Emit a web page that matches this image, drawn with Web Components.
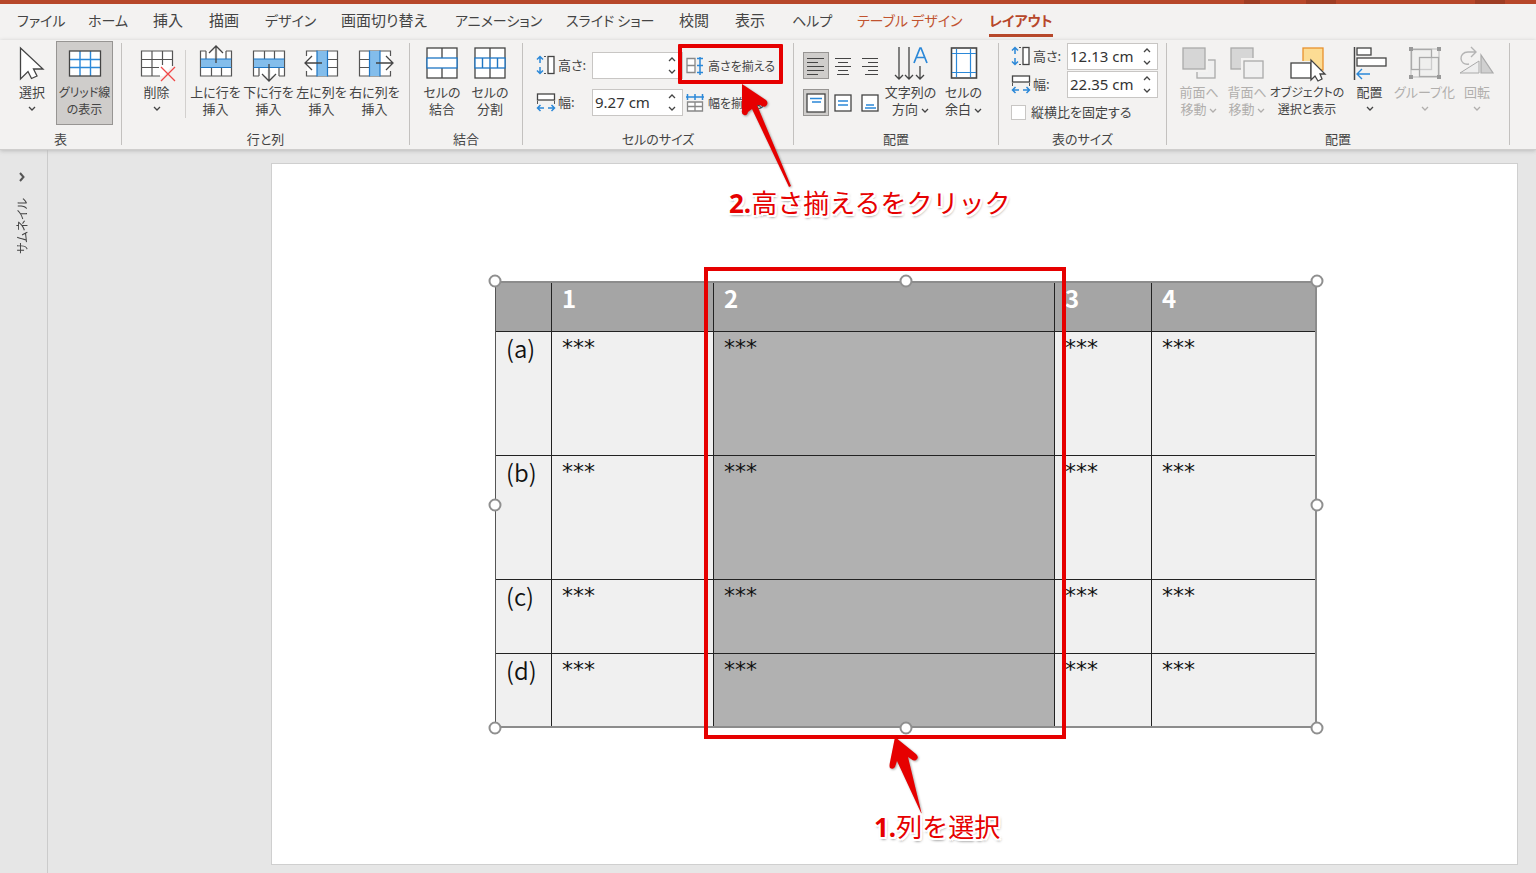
<!DOCTYPE html>
<html lang="ja">
<head>
<meta charset="utf-8">
<title>レイアウト</title>
<style>
html,body{margin:0;height:100%}
body{font-family:"Noto Sans CJK JP","Noto Sans",sans-serif;font-feature-settings:"palt";color:#444;background:#e6e6e6}
</style>
</head>
<body>
<ppt-window></ppt-window>
<script>
const K = '#444', B = '#2b88d8', F = '#83bdeb';
const chevron = 'M1 1l3 3 3-3';
const heightIcon = `<g fill="none" stroke="${B}" stroke-width="1.5"><path d="M4 2v6M1 4.5L4 1.5l3 3M4 12v6M1 15.5l3 3 3-3"/></g><path d="M8 1.5h3M8 18.500h3" stroke="#555" stroke-dasharray="2 1"/><rect x="12" y="1.500" width="6" height="17" fill="#fff" stroke="${K}" stroke-width="1.300"/>`;
const widthIcon = `<rect x="1.500" y="2" width="17" height="6" fill="#fff" stroke="${K}" stroke-width="1.300"/><path d="M1.500 9v3M18.500 9v3" stroke="#555"/><g fill="none" stroke="${B}" stroke-width="1.500"><path d="M2 16h6M4.500 13l-3 3 3 3M12 16h6M15.500 13l3 3-3 3"/></g>`;
const ICONS = {
  cursor:[34,34,`<path d="M5.500 2V33L13 25.500L16.500 32.500L22 30L18.500 23H28Z" fill="#fff" stroke="${K}" stroke-width="1.300"/>`],
  grid:[34,34,`<rect x="1.500" y="5" width="31" height="25" fill="#fff"/><path d="M12 5v25M22.500 5v25M2 13.500h30M2 21.500h30" stroke="${B}" stroke-width="1.400"/><rect x="1.500" y="5" width="31" height="25" fill="none" stroke="${K}" stroke-width="1.300"/>`],
  del:[34,34,`<path d="M1.500 5h31v14l-9 11h-22z" fill="#fff"/><path d="M20 30H1.500V5h31v15M12 5v25M22.500 5v14M2 13.500h30M2 21.500h17" fill="none" stroke="#555" stroke-width="1.200"/><path d="M21 21l14 14M35 21L21 35" stroke="#f04848" stroke-width="1.300"/>`],
  up:[34,34,`<rect x="1.500" y="5" width="31" height="25" fill="#fff"/><path d="M7 5H1.500v25h31V5H27M7 5v8M27 5v8M12.500 22v8M22.500 22v8" fill="none" stroke="#555" stroke-width="1.200"/><rect x="2" y="13" width="30" height="8.500" fill="${F}"/><path d="M1.500 13h31M1.500 21.500h31" stroke="#1e76c4" stroke-width="1.200"/><path d="M17 12V1" stroke="#f3f2f1" stroke-width="4"/><path d="M17 17V0M10 7l7-7 7 7" fill="none" stroke="${K}" stroke-width="1.300"/>`],
  down:[34,36,`<rect x="1.500" y="5" width="31" height="25" fill="#fff"/><path d="M7 30H1.500V5h31v25H27M12.500 5v8M22.500 5v8M7 22v8M27 22v8" fill="none" stroke="#555" stroke-width="1.200"/><rect x="2" y="13" width="30" height="8.500" fill="${F}"/><path d="M1.500 13h31M1.500 21.500h31" stroke="#1e76c4" stroke-width="1.200"/><path d="M17 24v11" stroke="#f3f2f1" stroke-width="4"/><path d="M17 18v17M10 28l7 7 7-7" fill="none" stroke="${K}" stroke-width="1.300"/>`],
  left:[34,34,`<rect x="2" y="5" width="30" height="25" fill="#fff"/><path d="M1.500 10V5h31v25h-31v-5M22 13.500h10M22 21.500h10" fill="none" stroke="#555" stroke-width="1.200"/><rect x="12" y="5" width="10" height="25" fill="${F}"/><path d="M12 4.500v26M22.500 4.500v26" stroke="#1e76c4" stroke-width="1.200"/><path d="M17 17H0M7 10l-7 7 7 7" fill="none" stroke="${K}" stroke-width="1.300"/>`],
  right:[34,34,`<rect x="2" y="5" width="30" height="25" fill="#fff"/><path d="M32.500 10V5h-31v25h31v-5M12 13.500H2M12 21.500H2" fill="none" stroke="#555" stroke-width="1.200"/><rect x="12" y="5" width="10" height="25" fill="${F}"/><path d="M11.500 4.500v26M22 4.500v26" stroke="#1e76c4" stroke-width="1.200"/><path d="M18 17h16M28 10l7 7-7 7" fill="none" stroke="${K}" stroke-width="1.300"/>`],
  merge:[34,34,`<rect x="2" y="2" width="30" height="30" fill="#fff" stroke="${K}" stroke-width="1.300"/><path d="M17 2v10M17 22v10" stroke="${K}" stroke-width="1.300"/><rect x="2" y="12" width="30" height="10" fill="#fff" stroke="#1e76c4" stroke-width="1.300"/>`],
  split:[34,34,`<rect x="2" y="2" width="30" height="30" fill="#fff" stroke="${K}" stroke-width="1.300"/><path d="M17 2v10M17 22v10" stroke="${K}" stroke-width="1.300"/><rect x="2" y="12" width="30" height="10" fill="#fff" stroke="#1e76c4" stroke-width="1.300"/><path d="M9.500 12v10M17 12v10M24.500 12v10" stroke="#1e76c4" stroke-width="1.400"/>`],
  textdir:[34,34,`<g fill="none" stroke="${K}" stroke-width="1.300"><path d="M5 1v32M1 29l4 4 4-4M15 1v32M11 29l4 4 4-4M26 20v13M22 29l4 4 4-4"/></g><path d="M20 17l6-15h1l6 15M22 11.500h9" fill="none" stroke="${B}" stroke-width="1.700"/>`],
  margins:[34,34,`<rect x="4.500" y="2" width="25" height="30" fill="#fff" stroke="${K}" stroke-width="1.600"/><path d="M9.500 3v28M23.500 3v28M5 7.500h24M5 26.500h24" stroke="${B}" stroke-width="1.200"/>`],
  front:[34,34,`<rect x="15" y="14" width="18" height="18" fill="#f0f0f0" stroke="#aaa" stroke-width="1.300"/><rect x="0" y="0" width="26" height="26" fill="#f3f2f1"/><rect x="1" y="2" width="22" height="21" fill="#d6d6d6" stroke="#aaa" stroke-width="1.300"/>`],
  back:[34,34,`<rect x="1" y="2" width="22" height="21" fill="#d6d6d6" stroke="#aaa" stroke-width="1.300"/><rect x="11" y="12" width="23" height="22" fill="#f3f2f1"/><rect x="14" y="15" width="19" height="17" fill="#f0f0f0" stroke="#aaa" stroke-width="1.300"/>`],
  select:[34,34,`<rect x="13" y="2" width="20" height="22" fill="#fcdc94" stroke="#e8912d" stroke-width="1.300"/><path d="M0 15h22v18H0z" fill="#f3f2f1"/><rect x="1" y="17" width="20" height="15" fill="#fff" stroke="${K}" stroke-width="1.300"/><path d="M21 14v20l4-4 3 5 4-2-2-5h5z" fill="#fff" stroke="${K}" stroke-width="1.300"/>`],
  align:[34,34,`<path d="M1.500 1v33" stroke="${K}" stroke-width="1.500"/><rect x="4" y="2" width="14" height="7" fill="#fff" stroke="${K}" stroke-width="1.300"/><rect x="4" y="12" width="29" height="8" fill="#fff" stroke="${K}" stroke-width="1.300"/><path d="M17 28H4M9 23l-5 5 5 5" fill="none" stroke="${B}" stroke-width="1.400"/>`],
  group:[34,34,`<rect x="3" y="3" width="28" height="28" fill="none" stroke="#bbb"/><g fill="#eee" fill-opacity=".500" stroke="#aaa" stroke-width="1.300"><rect x="3.500" y="3.500" width="20" height="20"/><rect x="11.500" y="11.500" width="19" height="19"/></g><path d="M1 1h4v4H1zM29 1h4v4h-4zM1 29h4v4H1zM29 29h4v4h-4z" fill="#999"/>`],
  rotate:[36,34,`<path d="M10 18C0 20-1 6 9 6h8M12 1l5 5-5 5" fill="none" stroke="#b4b4b4" stroke-width="1.400"/><path d="M1 27l19-12v12z" fill="#eee" stroke="#aaa"/><path d="M22 27V9l12 18z" fill="#d0d0d0" stroke="#aaa" stroke-width="1.200"/>`],
  height:[20,20,heightIcon], width:[20,20,widthIcon],
  rows:[18,18,`<path d="M1 1.500h8v14H1zM1 8.500h8" fill="#fff" stroke="#888" stroke-width="1.300"/><path d="M11 1.500h6M11 8.500h6M11 15.500h6M14 0v18" fill="none" stroke="${B}" stroke-width="1.500"/>`],
  cols:[18,18,`<path d="M1.500 8h15v9h-15zM9 8v9M1.500 12.500h15" fill="#fff" stroke="#888" stroke-width="1.300"/><path d="M0 3h18M1.500 0v6M9 0v6M16.500 0v6" fill="none" stroke="${B}" stroke-width="1.500"/>`],
  hl:[18,18,`<path d="M0 1.500h17M0 5.500h11M0 9.500h17M0 13.500h17M0 17.500h11" stroke="${K}" stroke-width="1.200"/>`],
  hc:[18,18,`<path d="M1 1.500h16M4 5.500h10M1 9.500h16M4 13.500h10M3 17.500h12" stroke="${K}" stroke-width="1.200"/>`],
  hr:[18,18,`<path d="M1 1.500h16M7 5.500h10M1 9.500h16M7 13.500h10M4 17.500h13" stroke="${K}" stroke-width="1.200"/>`],
  vt:[18,18,`<rect x="0" y="0" width="18" height="18" fill="#fff" stroke="${K}" stroke-width="1.300"/><path d="M3 4.500h12M5 8h9" stroke="${B}" stroke-width="1.300"/>`],
  vm:[18,18,`<rect x="1" y="1" width="16" height="16" fill="#fff" stroke="${K}" stroke-width="1.300"/><path d="M4 7h10M4 11h10" stroke="${B}" stroke-width="1.300"/>`],
  vb:[18,18,`<rect x="1" y="1" width="16" height="16" fill="#fff" stroke="${K}" stroke-width="1.300"/><path d="M5 11h8M4 14h11" stroke="${B}" stroke-width="1.300"/>`],
  chev:[8,5,`<path d="${chevron}" fill="none" stroke="currentColor" stroke-width="1.300"/>`],
  chevup:[8,5,`<path d="M1 4l3-3 3 3" fill="none" stroke="#444" stroke-width="1.300"/>`],
  chevright:[6,10,`<path d="M1 1l3.500 4L1 9" fill="none" stroke="#555" stroke-width="2"/>`]
};
const define = (name, html, setup) => customElements.define(name, class extends HTMLElement {
  constructor(){
    super();
    const t = document.createElement('template');
    t.innerHTML = html;
    this.attachShadow({mode:'open'}).append(t.content.cloneNode(true));
  }
  connectedCallback(){ if (setup) setup(this, this.shadowRoot); }
});

define('rb-icon', `<style>:host{display:inline-flex;flex:none;vertical-align:middle}svg{display:block;overflow:visible}</style><svg aria-hidden="true"></svg>`, (el, root) => {
  const [w,h,body] = ICONS[el.getAttribute('name')];
  const s = root.querySelector('svg');
  s.setAttribute('width', w); s.setAttribute('height', h); s.setAttribute('viewBox', `0 0 ${w} ${h}`);
  s.innerHTML = body;
});

define('rb-tab', `<style>
:host{display:block;white-space:nowrap}
a{display:inline-block;color:inherit;text-decoration:none;font-size:var(--tab-size,14px);line-height:24px;padding-bottom:2px;border-bottom:3px solid transparent}
:host([wide]){--tab-size:15px}
:host([context]){color:#c1532f}
:host([current]) a{font-weight:700;border-color:#b7472a;color:#b7472a}
</style><a href="#"><slot></slot></a>`);

define('rb-tabs', `<style>
:host{display:block;height:36px;background:#f3f2f1}
nav{display:grid;grid-template-columns:71px 65px 56px 56px 76px 114px 111px 113px 56px 57px 65px 132px auto;padding:3px 0 0 17px}
</style><nav>
<rb-tab>ファイル</rb-tab><rb-tab>ホーム</rb-tab><rb-tab wide>挿入</rb-tab><rb-tab wide>描画</rb-tab><rb-tab>デザイン</rb-tab><rb-tab wide>画面切り替え</rb-tab><rb-tab>アニメーション</rb-tab><rb-tab>スライド ショー</rb-tab><rb-tab wide>校閲</rb-tab><rb-tab wide>表示</rb-tab><rb-tab>ヘルプ</rb-tab><rb-tab context>テーブル デザイン</rb-tab><rb-tab current>レイアウト</rb-tab></nav>`);

define('rb-group', `<style>
:host{display:flex;flex:none}
.main{display:flex;flex-direction:column}
.items{display:flex;height:88px;padding:0 8px}
:host([inset]) .items{padding-left:9px}
:host([flush]) .items{padding-left:12px}
.name{font-size:13px;line-height:20px;text-align:center}
.sep{width:1px;background:#c3c1bf;margin:2px 0 4px}
</style><div class="main"><div class="items"><slot></slot></div><div class="name"><slot name="name"></slot></div></div><div class="sep"></div>`);

define('rb-button', `<style>
:host{display:block;width:48px;flex:none}
:host([size="m"]){width:53px}
:host([size="l"]){width:57px}
:host([size="xl"]){width:72px}
button{display:flex;flex-direction:column;align-items:center;width:100%;height:84px;box-sizing:border-box;margin:0;padding:4px 0 0;border:1px solid transparent;background:none;color:inherit;font:inherit;font-size:13px;font-feature-settings:inherit;line-height:17px;white-space:nowrap}
:host([compact]) button{font-size:12px}
:host([pressed]) button{background:#cfcdcb;border-color:#979593}
button:disabled{color:#b1afad}
.pic{height:37px;display:flex;flex:none;align-items:flex-start}
.below{height:17px;display:flex;align-items:center}
.text{text-align:center}
</style><button type="button"><span class="pic"></span><span class="text"><slot></slot></span></button>`, (el, root) => {
  root.querySelector('.pic').innerHTML = `<rb-icon name="${el.getAttribute('icon')}"></rb-icon>`;
  const b = root.querySelector('button');
  b.disabled = el.hasAttribute('off');
  if (el.hasAttribute('menu')) b.insertAdjacentHTML('beforeend', '<span class="below"><rb-icon name="chev"></rb-icon></span>');
});

define('rb-mini', `<style>
:host{display:block}
button{display:flex;align-items:center;gap:4px;height:27px;width:97px;margin:0;padding:0 0 0 3px;border:0;background:none;color:inherit;font:inherit;font-size:12px;font-feature-settings:inherit;white-space:nowrap}
:host([toggle]) button{width:26px;padding:0;justify-content:center;box-sizing:border-box;border:1px solid transparent}
:host([pressed]) button{background:#cfcdcb;border-color:#979593}
</style><button type="button"><slot></slot></button>`, (el, root) => {
  const b = root.querySelector('button');
  b.insertAdjacentHTML('afterbegin', `<rb-icon name="${el.getAttribute('icon')}"></rb-icon>`);
  if (el.title) b.setAttribute('aria-label', el.title);
});

define('rb-field', `<style>
:host{display:flex;height:27px}
label{display:flex;align-items:center;gap:2px;width:56px;height:25px;font-size:13px;white-space:nowrap}
.box{display:flex;width:91px;box-sizing:border-box;background:#fff;border:1px solid #c8c6c4}
input{flex:1;min-width:0;border:0;margin:0;padding:0 0 1px 2px;background:none;color:#333;font:15px "Noto Sans",sans-serif}
.spin{display:flex;flex-direction:column;width:20px}
.spin button{flex:1;display:flex;align-items:center;justify-content:center;border:0;margin:0;padding:0;background:none;color:#444}
</style><label for="v"><slot></slot></label><div class="box"><input id="v" type="text"><div class="spin"><button type="button" aria-label="増やす"><rb-icon name="chevup"></rb-icon></button><button type="button" aria-label="減らす"><rb-icon name="chev"></rb-icon></button></div></div>`, (el, root) => {
  root.querySelector('input').value = el.getAttribute('value') || '';
  root.querySelector('label').insertAdjacentHTML('afterbegin', `<rb-icon name="${el.getAttribute('icon')}"></rb-icon>`);
});

define('note-text', `<style>
:host{display:block;white-space:nowrap;font-size:26px;line-height:40px;font-weight:400;color:#e60000;text-shadow:2px 0 #fff,-2px 0 #fff,0 2px #fff,0 -2px #fff,2px 2px #fff,-2px 2px #fff,2px -2px #fff,-2px -2px #fff,1px 2px 3px #444;font-feature-settings:normal}
b{font-family:"Noto Sans",sans-serif;font-weight:700}
</style><b><slot name="no"></slot></b><slot></slot>`);

define('note-arrow', `<style>:host{display:block}svg{display:block;overflow:visible;filter:drop-shadow(1px 1px 1px rgba(0,0,0,.35))}</style><svg></svg>`, (el, root) => {
  const s = root.querySelector('svg');
  const big = el.hasAttribute('long');
  s.setAttribute('width', big ? 52 : 36); s.setAttribute('height', big ? 106 : 80);
  s.innerHTML = big
    ? '<path d="M2 1L26 17Q29 20 26 23Q24 25 20 22L17 22L51 103L49 104L12 26L8 29Q7 33 4 32Q1 31 2 27Z" fill="#e60000"/>'
    : '<path d="M7 0L28 17Q31 20 29 22Q27 25 23 22L20 20L34 78L9 24L7 30Q5 33 2 31Q1 29 2 25Z" fill="#e60000"/>';
});

define('ribbon-bar', `<style>
:host{display:flex;height:108px;padding-top:1px;background:#f3f2f1;border-bottom:1px solid #cfcecd;box-shadow:0 1px 4px #bbb}
.split{width:1px;background:#d2d0ce;margin:9px 3px 11px 2px}
.sizes{display:grid;grid-template-columns:147px 97px;row-gap:10px;align-content:start;padding:11px 5px 0}
.anchor{position:relative}
.mark{position:absolute;left:-5px;right:-3px;top:-8px;bottom:-5px;border:4px solid #e60000;box-sizing:border-box;border-radius:1px;pointer-events:none}
note-arrow{position:absolute;left:57px;top:31px;z-index:1}
note-text{position:absolute;left:46px;top:130px;z-index:1}
.aligns{display:grid;grid-template-columns:repeat(3,26px);gap:10px 1px;align-content:start;padding:11px 1px 0 0}
.table{display:grid;row-gap:1px;align-content:start;padding-top:2px}
.check{display:flex;align-items:center;gap:5px;font-size:13px;line-height:26px;white-space:nowrap}
.check input{appearance:none;width:15px;height:15px;margin:0;background:#fff;border:1px solid #c8c6c4}
</style>
<rb-group><rb-button icon="cursor" menu>選択</rb-button><rb-button icon="grid" size="l" compact pressed>グリッド線<br>の表示</rb-button><span slot="name">表</span></rb-group>
<rb-group><rb-button icon="del" size="m" menu>削除</rb-button><div class="split"></div><rb-button icon="up" size="m">上に行を<br>挿入</rb-button><rb-button icon="down" size="m">下に行を<br>挿入</rb-button><rb-button icon="left" size="m">左に列を<br>挿入</rb-button><rb-button icon="right" size="m">右に列を<br>挿入</rb-button><span slot="name">行と列</span></rb-group>
<rb-group><rb-button icon="merge">セルの<br>結合</rb-button><rb-button icon="split">セルの<br>分割</rb-button><span slot="name">結合</span></rb-group>
<rb-group><div class="sizes"><rb-field icon="height">高さ:</rb-field><div class="anchor"><rb-mini icon="rows">高さを揃える</rb-mini><div class="mark"></div><note-arrow long></note-arrow><note-text><span slot="no">2.</span>高さ揃えるをクリック</note-text></div><rb-field icon="width" value="9.27 cm">幅:</rb-field><rb-mini icon="cols">幅を揃える</rb-mini></div><span slot="name">セルのサイズ</span></rb-group>
<rb-group inset><div class="aligns"><rb-mini toggle pressed icon="hl" title="左揃え"></rb-mini><rb-mini toggle icon="hc" title="中央揃え"></rb-mini><rb-mini toggle icon="hr" title="右揃え"></rb-mini><rb-mini toggle pressed icon="vt" title="上揃え"></rb-mini><rb-mini toggle icon="vm" title="上下中央揃え"></rb-mini><rb-mini toggle icon="vb" title="下揃え"></rb-mini></div><rb-button size="m" icon="textdir">文字列の<br>方向 <rb-icon name="chev"></rb-icon></rb-button><rb-button size="m" icon="margins">セルの<br>余白 <rb-icon name="chev"></rb-icon></rb-button><span slot="name">配置</span></rb-group>
<rb-group flush><div class="table"><rb-field icon="height" value="12.13 cm">高さ:</rb-field><rb-field icon="width" value="22.35 cm">幅:</rb-field><label class="check"><input type="checkbox">縦横比を固定する</label></div><span slot="name">表のサイズ</span></rb-group>
<rb-group><rb-button icon="front" off>前面へ<br>移動 <rb-icon name="chev"></rb-icon></rb-button><rb-button icon="back" off>背面へ<br>移動 <rb-icon name="chev"></rb-icon></rb-button><rb-button icon="select" size="xl" compact>オブジェクトの<br>選択と表示</rb-button><rb-button icon="align" size="m" menu>配置</rb-button><rb-button icon="group" size="l" off menu>グループ化</rb-button><rb-button icon="rotate" off menu>回転</rb-button><span slot="name">配置</span></rb-group>`);

define('thumb-rail', `<style>
:host{display:block;width:47px;flex:none;border-right:1px solid #cbcbcb}
button{display:flex;flex-direction:column;align-items:center;gap:16px;width:44px;border:0;background:none;margin:0;padding:22px 0 0;color:#444;font:inherit;font-size:12px;line-height:18px;font-feature-settings:inherit}
span{writing-mode:vertical-rl;text-orientation:sideways;transform:rotate(180deg)}
</style><button type="button"><rb-icon name="chevright"></rb-icon><span>サムネイル</span></button>`);

define('slide-table', `<style>
:host{display:block;position:relative;color:#111}
table{width:100%;table-layout:fixed;border-collapse:separate;border-spacing:0;font-size:24px;line-height:32px}
th,td{padding:0 0 0 10px;text-align:left;vertical-align:top;border-right:1px solid #222;border-bottom:1px solid #222;box-sizing:border-box}
td{font-family:"DejaVu Sans",sans-serif;font-size:22px}
tr>:first-child{border-left:1px solid #222}
thead th{background:#a5a5a5;color:#fff;font-weight:700;height:51px;line-height:34px}
tbody th{font-weight:350}
tbody tr>*{background:#f0f0f0;height:124px}
tbody tr.short>*{height:74px}
tbody tr>:nth-child(3){background:#b1b1b1}
.c0{width:57px}.c1{width:162px}.c3{width:97px}.c4{width:165px}
.outline{position:absolute;inset:0;border:2px solid #8c8c8c;border-left:1px solid #555;pointer-events:none}
i{position:absolute;width:9px;height:9px;border:2px solid #8f8f8f;border-radius:50%;background:#fff;translate:-50% -50%}
.l{left:0}.m{left:50%}.r{left:100%}.t{top:0}.c{top:50%}.b{top:100%}
</style>
<table><colgroup><col class="c0"><col class="c1"><col><col class="c3"><col class="c4"></colgroup>
<thead><tr><th></th><th>1</th><th>2</th><th>3</th><th>4</th></tr></thead>
<tbody>
<tr><th>(a)</th><td>***</td><td>***</td><td>***</td><td>***</td></tr>
<tr><th>(b)</th><td>***</td><td>***</td><td>***</td><td>***</td></tr>
<tr class="short"><th>(c)</th><td>***</td><td>***</td><td>***</td><td>***</td></tr>
<tr class="short"><th>(d)</th><td>***</td><td>***</td><td>***</td><td>***</td></tr>
</tbody></table><div class="outline"></div>
<i class="l t"></i><i class="m t"></i><i class="r t"></i><i class="l c"></i><i class="r c"></i><i class="l b"></i><i class="m b"></i><i class="r b"></i>`);

define('slide-page', `<style>
:host{display:block;flex:1;box-sizing:border-box;background:#fff;border:1px solid #cfcfcf;padding:117px 200px 0 223px}
.area{position:relative}
.mark{position:absolute;left:209px;right:251px;top:-14px;bottom:-11px;border:4px solid #e60000;box-sizing:border-box}
note-arrow{position:absolute;left:calc(50% - 18px);top:456px}
note-text{position:absolute;left:calc(50% - 32px);top:525px}
</style><div class="area"><slide-table></slide-table><div class="mark"></div><note-arrow></note-arrow><note-text><span slot="no">1.</span>列を選択</note-text></div>`);

define('ppt-window', `<style>
:host{display:flex;flex-direction:column;min-height:100%}
.top{height:4px;background:linear-gradient(90deg,transparent 81%,#9e3d24 81% 82%,transparent 82% 85%,#9e3d24 85% 87%,transparent 87% 96%,#9e3d24 96% 98%,transparent 98%),#b7472a}
ribbon-bar{position:relative;z-index:1}
main{flex:1;display:flex}
.stage{flex:1;display:flex;padding:13px 18px 8px 223px}
</style><div class="top"></div><rb-tabs></rb-tabs><ribbon-bar></ribbon-bar><main><thumb-rail></thumb-rail><div class="stage"><slide-page></slide-page></div></main>`);
</script>
</body>
</html>
